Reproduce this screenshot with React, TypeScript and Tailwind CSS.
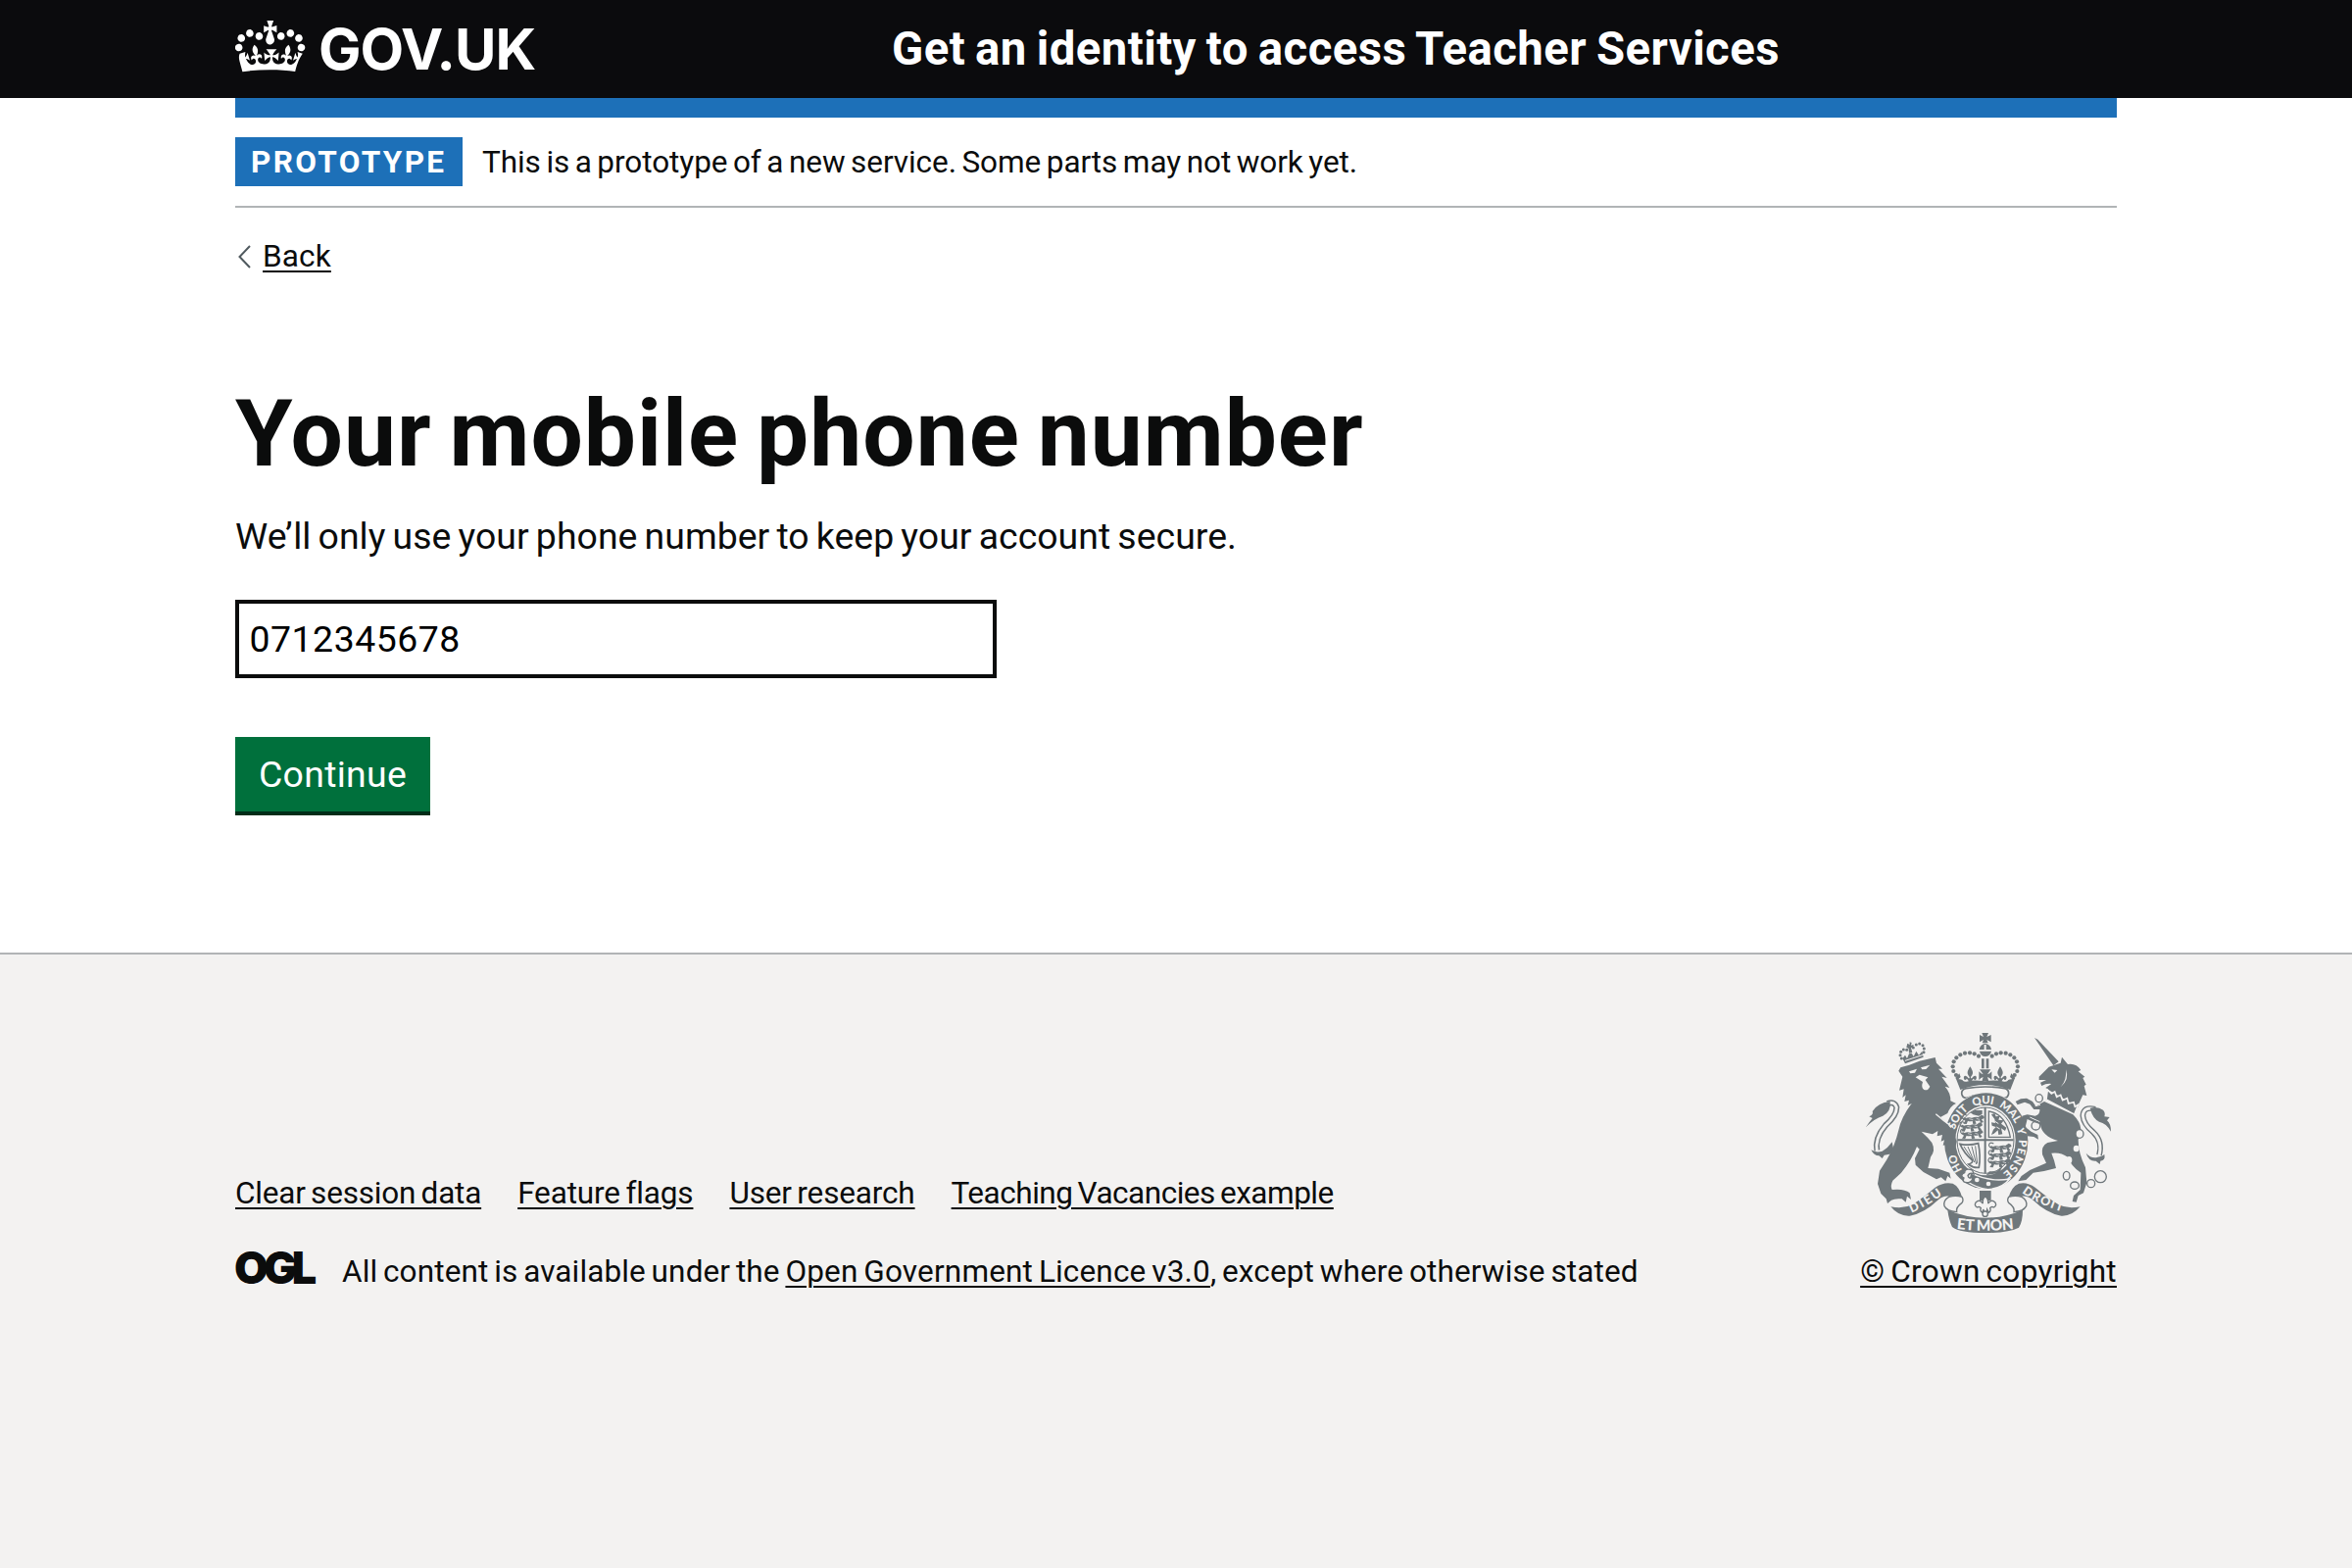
import type { ReactNode } from "react";

const INK = "#6f777b";
const PAPER = "#f3f2f1";

function CrownLogo() {
  return (
    <svg className="mt-[-10px] h-[64px] w-[72px] shrink-0" viewBox="0 0 36 32" fill="currentColor" fillRule="evenodd" aria-hidden="true">
      <path d="M6.7 12.2c1 .4 2.1-.1 2.5-1s-.1-2.1-1-2.5c-1-.4-2.1.1-2.5 1-.4 1 0 2.1 1 2.5m-4.3 2.5c1 .4 2.1-.1 2.5-1s-.1-2.1-1-2.5c-1-.4-2.1.1-2.5 1-.5 1 0 2.1 1 2.5m-1.3 4.8c1 .4 2.1-.1 2.5-1 .4-1-.1-2.1-1-2.5-1-.4-2.1.1-2.5 1-.4 1 0 2.1 1 2.5m10.4-5.8c1 .4 2.1-.1 2.5-1s-.1-2.1-1-2.5c-1-.4-2.1.1-2.5 1s0 2.1 1 2.5m17.4-1.5c-1 .4-2.1-.1-2.5-1s.1-2.1 1-2.5c1-.4 2.1.1 2.5 1 .5 1 0 2.1-1 2.5m4.3 2.5c-1 .4-2.1-.1-2.5-1s.1-2.1 1-2.5c1-.4 2.1.1 2.5 1 .5 1 0 2.1-1 2.5m1.3 4.8c-1 .4-2.1-.1-2.5-1-.4-1 .1-2.1 1-2.5 1-.4 2.1.1 2.5 1 .4 1 0 2.1-1 2.5m-10.4-5.8c-1 .4-2.1-.1-2.5-1s.1-2.1 1-2.5c1-.4 2.1.1 2.5 1s0 2.1-1 2.5m-5.3-4.9 2.4 1.3V6.5l-2.4.8c-.1-.1-.1-.2-.2-.3s1-3 1-3h-3.4l1 3c-.1.1-.2.2-.2.3-.1.1-2.4-.7-2.4-.7v3.5L17 8.8c-.1.1 0 .2.1.3l-1.4 4.2c-.1.2-.1.4-.1.7 0 1.1.8 2.1 1.9 2.2h.6C19.2 16 20 15.1 20 14c0-.2 0-.4-.1-.7l-1.4-4.2c.2-.1.3-.2.3-.3m-1 20.3c4.6 0 8.9.3 12.8.9 1.1-4.6 2.4-7.2 3.8-9.1l-2.6-.9c.3 1.3.3 1.9 0 2.7-.4-.4-.8-1.1-1.1-2.3l-1.2 4c.7-.5 1.3-.8 2-.9-1.1 2.5-2.6 3.1-3.5 3-1.1-.2-1.7-1.2-1.5-2.1.3-1.2 1.5-1.5 2.1-.1 1.1-2.3-.8-3-2-2.3 1.9-1.9 2.1-3.5.6-5.6-2.1 1.6-2.1 3.2-1.2 5.5-1.2-1.4-3.2-.6-2.5 1.6.9-1.4 2.1-.5 1.9.8-.2 1.1-1.7 2.1-3.5 1.9-2.7-.2-2.9-2.1-2.9-3.6.7-.1 1.9.5 2.9 1.9l.4-4.3c-1.1 1.1-2.1 1.4-3.2 1.4.4-1.2 2.1-3 2.1-3h-5.4s1.7 1.9 2.1 3c-1.1 0-2.1-.2-3.2-1.4l.4 4.3c1-1.4 2.2-2 2.9-1.9-.1 1.5-.2 3.4-2.9 3.6-1.9.2-3.4-.8-3.5-1.9-.2-1.3 1-2.2 1.9-.8.7-2.3-1.2-3-2.5-1.6.9-2.2.9-3.9-1.2-5.5-1.5 2-1.3 3.7.6 5.6-1.2-.7-3.1 0-2 2.3.6-1.4 1.8-1.1 2.1.1.2.9-.3 1.9-1.5 2.1-.9.2-2.4-.5-3.5-3 .6 0 1.2.3 2 .9l-1.2-4c-.3 1.1-.7 1.9-1.1 2.3-.3-.8-.2-1.4 0-2.7l-2.9.9C1.3 23 2.6 25.5 3.7 30.1c4.7-.7 9.3-1 14-1" />
    </svg>
  );
}

const crownBeads: [number, number][] = [
  [417, 143], [404, 136], [390, 133], [375, 134], [361, 139], [349, 148], [341, 160], [338, 175], [340, 189], [348, 201],
];
const chainLinks: [number, number, number, number][] = [
  [602, 272, 11, 12], [592, 356, 13, 13], [686, 509, 10, 13], [711, 539, 13, 11], [761, 533, 12, 12], [790, 512, 18, 18],
];
const smallCrownBeads: [number, number][] = [
  [181, 150], [177, 140], [179, 130], [187, 123], [197, 124], [217, 117], [226, 108], [236, 105], [246, 110], [250, 120], [249, 131],
];
const garterWords: [string, number, number][] = [
  ["SOIT", 34, 76], ["QUI", 128, 62], ["MAL", 208, 74], ["Y", 296, 18], ["PENSE", 332, 118],
];

/* A walking lion charge used in the quartered shield. */
function Passant({ y, x }: { x: number; y: number }) {
  return (
    <g transform={`translate(${x} ${y})`}>
      <path d="M2 4Q6 -4 12 2Q20 -2 30 1Q42 -4 50 -1L60 -8Q70 -6 68 2L60 6L66 14L58 17L54 9Q46 12 40 9L44 19L34 20L32 10Q24 13 18 10L14 20L4 19L10 10Z" />
      <path d="M6 6Q-4 0 2 -8Q6 -12 14 -7" fill="none" stroke={INK} strokeWidth="3.5" />
      <path d="M22 4L34 7M44 3L54 6" stroke={PAPER} strokeWidth="2" />
    </g>
  );
}

function FleurDeLis({ x, y }: { x: number; y: number }) {
  return (
    <g transform={`translate(${x} ${y})`}>
      <path d="M0 -27Q-9 -14 -8 -6Q-6 2 -2 5L-2 19L2 19L2 5Q6 2 8 -6Q9 -14 0 -27Z" />
      <path d="M-5 9Q-11 -2 -18 2Q-22 8 -17 14L-12 13Q-12 7 -7 14L-3 20H3L7 14Q12 7 12 13L17 14Q22 8 18 2Q11 -2 5 9Z" />
    </g>
  );
}

function RoyalArms() {
  return (
    <svg className="h-[204px] w-[250px]" viewBox="72 72 750 612" fill={INK} role="img" aria-label="Royal coat of arms">
      {/* crown above the garter */}
      <path d="M427 72H447L442 84L455 78V100L442 93L446 103H428L432 93L420 100V78L432 84Z" />
      <path d="M419 123Q422 106 437 104Q453 106 456 123H440V108H434V123ZM420 128H456Q453 143 437 144Q423 143 420 128Z" />
      <path d="M426 151H434V181H426ZM440 151H448V181H440Z" />
      {crownBeads.map(([x, y]) => (
        <g key={`${x}-${y}`}>
          <circle cx={x} cy={y} r="6.3" />
          <circle cx={875 - x} cy={y} r="6.3" />
        </g>
      ))}
      <path d="M420 184H454Q446 196 444 199Q452 197 457 190V216Q450 208 444 207L448 220H427L431 207Q424 208 418 216V190Q424 197 431 199Q429 196 420 184Z" />
      <FleurDeLis x={391} y={202} />
      <FleurDeLis x={483} y={202} />
      <path d="M346 210L358 196L362 207L355 214Q368 212 373 224L362 224Z" />
      <path d="M529 210L517 196L513 207L520 214Q507 212 502 224L513 224Z" />
      <path d="M346 208Q360 222 380 221Q400 214 437 220Q475 214 495 221Q515 222 529 208L514 246Q475 231 437 231Q400 231 361 246Z" />
      <path d="M366 262Q362 246 378 242Q437 232 497 242Q512 246 508 262Q504 274 492 270Q437 250 383 270Q370 274 366 262Z" fill={PAPER} stroke={INK} strokeWidth="5" />

      {/* garter and quartered shield */}
      <ellipse cx="440" cy="403" rx="130" ry="149" fill={PAPER} />
      <ellipse cx="440" cy="403" rx="128" ry="147" />
      <ellipse cx="438" cy="401" rx="92" ry="107" fill={PAPER} />
      <ellipse cx="438" cy="401" rx="87" ry="101" fill={PAPER} stroke={INK} strokeWidth="3" />
      <path d="M437 300V502M352 400H524" stroke={INK} strokeWidth="6" fill="none" />
      <Passant x={366} y={331} />
      <Passant x={360} y={354} />
      <Passant x={362} y={376} />
      <Passant x={449} y={418} />
      <Passant x={448} y={441} />
      <Passant x={447} y={464} />
      <path d="M392 316L404 309H428V320L418 326L400 322Z" />
      <path d="M448 391V312Q500 320 514 391Z" fill="none" stroke={INK} strokeWidth="4" />
      <path d="M456 322L466 318L470 328L482 326L478 338L494 340L486 350L502 362L498 372L486 364L490 382L478 384L476 370L464 380L456 384L462 368L470 360L458 356L456 346L468 348L466 336Z" />
      <path d="M466 342L478 350M472 360L482 366" stroke={PAPER} strokeWidth="3" />
      <path d="M360 412Q390 418 416 410Q424 450 418 484Q400 486 386 474Q400 470 398 462Q372 440 360 412Z" fill="none" stroke={INK} strokeWidth="5" />
      <path d="M372 420L398 460M384 420L404 468M396 419L410 474M407 418L413 472" stroke={INK} strokeWidth="3" />
      <path d="M450 496H472L492 478L480 500L440 508Z" />
      <path id="motto-arc" d="M340 403A100 114 0 0 1 440 289A100 114 0 0 1 540 403A100 114 0 0 1 440 517" fill="none" />
      <path id="motto-start" d="M372 498Q348 466 343 420" fill="none" />
      <g fill={PAPER} fontFamily="Lato, sans-serif" fontWeight="900" fontSize="34" wordSpacing="0">
        {garterWords.map(([word, start, length]) => (
          <text key={word}>
            <textPath href="#motto-arc" startOffset={start} textLength={length}>{word}</textPath>
          </text>
        ))}
        <text><textPath href="#motto-start" startOffset="8">HO</textPath></text>
      </g>

      {/* buckle and strap */}
      <path d="M392 500Q450 530 512 519Q490 548 445 551Q410 546 384 528Z" stroke={PAPER} strokeWidth="4" />
      <circle cx="412" cy="522" r="7" fill={PAPER} />
      <circle cx="447" cy="534" r="7" fill={PAPER} />
      <path d="M398 492Q374 484 374 500Q358 508 372 516Q364 532 386 530Q400 526 398 514Q386 520 384 508Q390 498 402 504Z" fill={PAPER} stroke={INK} strokeWidth="4" />

      {/* motto scroll */}
      <path d="M420 555H455V586H420Z" />
      <path d="M437 571Q428 582 430 594Q420 580 409 590Q402 600 412 606Q420 602 424 608Q420 618 428 622L432 612Q434 630 437 632Q441 630 443 612L448 622Q456 618 452 608Q456 602 464 606Q474 600 467 590Q456 580 446 594Q448 582 437 571Z" fill={PAPER} stroke={INK} strokeWidth="4" />
      <circle cx="437" cy="626" r="8" fill={PAPER} stroke={INK} strokeWidth="4" />
      <path d="M148 604Q185 612 214 598Q255 570 284 545Q310 527 338 533Q358 542 367 577Q348 568 330 573Q312 568 292 584Q250 624 206 632Q172 634 148 604Z" />
      <path d="M728 604Q690 612 662 598Q620 570 590 545Q566 527 540 533Q518 542 508 577Q526 568 546 573Q563 568 584 584Q626 624 670 632Q702 634 728 604Z" />
      <path d="M326 574Q308 584 312 602Q320 618 350 620Q346 606 366 592Q372 584 366 574Q346 568 326 574Z" fill={PAPER} stroke={INK} strokeWidth="4" />
      <path d="M549 574Q567 584 563 602Q555 618 525 620Q529 606 509 592Q503 584 509 574Q529 568 549 574Z" fill={PAPER} stroke={INK} strokeWidth="4" />
      <path d="M322 614Q380 638 437 638Q495 638 552 614Q552 650 540 668Q510 684 437 684Q360 684 336 666Q326 645 322 614Z" />
      <path id="scroll-left" d="M206 625Q256 606 322 556" fill="none" />
      <path id="scroll-mid" d="M340 671Q437 684 540 670" fill="none" />
      <path id="scroll-right" d="M546 558Q600 600 690 624" fill="none" />
      <g fill={PAPER} fontFamily="Lato, sans-serif" fontWeight="900">
        <text fontSize="38"><textPath href="#scroll-left" startOffset="6" textLength="110">DIEU</textPath></text>
        <text fontSize="46"><textPath href="#scroll-mid" startOffset="10" textLength="176">ET MON</textPath></text>
        <text fontSize="38"><textPath href="#scroll-right" startOffset="4" textLength="136">DROIT</textPath></text>
      </g>

      {/* crowned lion */}
      <path d="M138 288Q160 280 166 300Q166 325 132 355Q98 395 106 432" fill="none" stroke={INK} strokeWidth="18" />
      <path d="M138 288Q160 280 166 300Q166 325 132 355Q98 395 106 436" fill="none" stroke={PAPER} strokeWidth="9" />
      <path d="M72 360Q82 345 92 333L82 328Q96 322 92 312Q108 286 146 282Q150 312 124 326Q98 334 72 360Z" />
      <path d="M88 430Q102 440 122 434Q140 424 152 406L158 436Q146 446 128 446L122 456L112 448Q96 448 88 430Z" />
      <path d="M172 188L178 178L205 170L236 158L284 147L288 164L306 182L294 182L320 210L304 206L328 240L314 236Q332 256 331 280L348 288Q330 296 322 318L300 330Q326 352 340 378L350 404L344 430L336 416L328 428L322 414L308 416L312 400L302 404L306 384L290 388L292 372L276 382L242 374Q262 392 274 408Q286 432 270 452L262 486L294 488L328 500L332 518L322 510L316 526L302 514L288 520L248 498L232 484L224 476L222 456L236 428L228 420Q212 462 180 500L154 524Q146 540 152 552Q190 548 206 562L210 582L198 572L194 590L182 580Q160 578 150 584L138 594L134 580L118 564L108 534L114 494L136 460Q160 420 172 370Q180 330 212 288L200 294L204 278L190 282L194 262L184 270L188 244L174 248L184 206Z" />
      <path d="M286 320Q310 342 340 362" fill="none" stroke={PAPER} strokeWidth="4" />
      <path d="M204 190L228 182L222 194L208 196ZM240 178L268 170L256 183L244 184ZM224 208L236 200L262 208L254 216L268 236Q262 250 250 246Q240 240 246 222Z" fill={PAPER} />
      {smallCrownBeads.map(([x, y]) => (
        <circle key={`${x}-${y}`} cx={x} cy={y} r="4.5" />
      ))}
      <path d="M199 104L206 108L206 100L212 102L210 110L218 108L216 116L210 118L214 132L204 134L203 120L196 116Z" />
      <path d="M184 150L192 140L198 150L204 136L212 134L218 144L226 128L234 140L244 128L248 146L192 166Z" />
      <path d="M192 157L248 139" stroke={PAPER} strokeWidth="3" />

      {/* chained unicorn */}
      <path d="M774 305Q738 296 736 325Q738 352 768 376Q798 404 786 446" fill="none" stroke={INK} strokeWidth="17" />
      <path d="M774 305Q738 296 736 325Q738 352 768 376Q798 404 785 450" fill="none" stroke={PAPER} strokeWidth="9" />
      <path d="M758 302Q782 296 798 308Q806 316 802 328L818 330L810 340Q822 350 822 374Q808 348 786 344Q766 334 758 302Z" />
      <path d="M746 440Q762 458 782 452Q796 450 802 444Q806 462 790 464L788 474L776 464Q754 466 746 440Z" />
      <path d="M588 87L598 92L662 160L646 172Z" />
      <path d="M602 206L632 176L656 168L668 164L672 146L690 168Q716 164 730 186L722 190L742 206L736 210L746 230L740 234L748 264L736 262L726 284L722 300L634 248L622 240L640 228Q624 226 610 234L606 224L624 216L602 216Z" />
      <path d="M640 184L658 186L650 194ZM684 184Q696 214 668 238Q688 216 684 184Z" fill={PAPER} />
      <path d="M628 246L640 258L650 252L656 268L668 262L674 278L688 272L692 288L708 284L712 298L722 292L710 322L624 276Z" fill={INK} stroke={PAPER} strokeWidth="5" />
      <path d="M618 282L706 322Q728 344 730 366L722 400Q722 440 744 484L748 530L738 562L722 570L716 590L704 588L708 570L728 552L730 500Q700 480 690 452Q668 436 640 440L648 462L654 486Q620 496 584 500L562 522L538 526L548 510L574 492L624 470L612 444Q608 418 628 408L660 402Q610 388 606 352L584 344L566 336L560 360L578 374L598 384L600 398L586 390L566 388L564 374L548 354L550 326L566 322L590 326Q606 322 604 306L586 306L574 290L558 284L536 292L530 282L546 274L564 272L582 282L592 296Z" />
      <path d="M590 296L606 292M574 330L604 344" stroke={PAPER} strokeWidth="3" />
      {chainLinks.map(([x, y, rx, ry]) => (
        <ellipse key={`${x}-${y}`} cx={x} cy={y} rx={rx} ry={ry} fill="none" stroke={INK} strokeWidth="4" />
      ))}
      <ellipse cx="726" cy="381" rx="12" ry="13" fill={PAPER} stroke={INK} strokeWidth="4" />
      <ellipse cx="716" cy="426" rx="9" ry="10" fill={PAPER} />
      <ellipse cx="694" cy="461" rx="9" ry="11" fill={PAPER} />
    </svg>
  );
}

function TextLink({ className, children }: { className: string; children: ReactNode }) {
  return (
    <a href="#" className={"underline decoration-2 underline-offset-[4px] " + className}>
      {children}
    </a>
  );
}

export default function App() {
  return (
    <div className="flex min-h-[1600px] flex-col bg-white font-['Roboto',sans-serif] text-[31.5px] leading-[40px] text-[#0b0c0c] [word-spacing:-2.2px]">
      <header className="bg-[#0b0b0d] text-white">
        <div className="mx-auto flex h-[100px] w-[1920px] items-center">
          <a href="#" className="flex w-[670px] items-center gap-[13px]">
            <CrownLogo />
            <span className="font-['Inter',sans-serif] text-[58px] font-bold leading-[100px] tracking-[-1px]">GOV.UK</span>
          </a>
          <a href="#" className="whitespace-nowrap text-[47.3px] font-bold leading-[100px] tracking-[0.44px]">
            Get an identity to access Teacher Services
          </a>
        </div>
      </header>

      <div className="mx-auto w-[1920px]">
        <div className="h-[20px] bg-[#1d70b8]" />
        <div className="flex items-center border-b-2 border-[#b1b4b6] py-[20px]">
          <strong className="h-[50px] w-[232px] bg-[#1d70b8] pl-[16px] pt-px font-bold leading-[50px] tracking-[2.35px] text-white">PROTOTYPE</strong>
          <span className="ml-[20px] whitespace-nowrap pt-px tracking-[-0.06px]">
            This is a prototype of a new service. Some parts may not work yet.
          </span>
        </div>

        <a href="#" className="mt-[30px] flex h-[40px] w-fit items-center">
          <svg className="mr-[12px] ml-[3px] h-[24px] w-[13px]" viewBox="0 0 13 24" fill="none" stroke="#505a5f" strokeWidth="2" aria-hidden="true">
            <path d="M12 1L1.5 12L12 23" />
          </svg>
          <span className="tracking-[0.15px] underline decoration-2 underline-offset-[4px]">Back</span>
        </a>

        <main>
          <h1 className="mt-[111px] text-[94.6px] font-bold leading-[100px] tracking-[1px] [word-spacing:-6.6px]">Your mobile phone number</h1>
          <p className="mt-[29px] text-[37.4px] leading-[50px] tracking-[0.04px]">
            We’ll only use your phone number to keep your account secure.
          </p>
          <div className="mt-[40px] h-[80px] w-[777px] border-4 border-[#0b0c0c] bg-white pl-[10.5px] text-[37.4px] leading-[72px] tracking-[0.52px] text-black">
            0712345678
          </div>
          <button className="mt-[60px] block h-[80px] w-[199px] border-b-4 border-[#002d18] bg-[#00703c] text-center text-[37.4px] leading-[76px] tracking-[0.3px] text-white">
            Continue
          </button>
        </main>
      </div>

      <footer className="mt-[140px] flex-1 border-t-2 border-[#b1b4b6] bg-[#f3f2f1] pt-[80px]">
        <div className="mx-auto flex w-[1920px] items-end justify-between">
          <div>
            <div className="flex gap-[37px]">
              <TextLink className="tracking-[-0.2px]">Clear session data</TextLink>
              <TextLink className="tracking-[-0.13px]">Feature flags</TextLink>
              <TextLink className="tracking-[-0.15px]">User research</TextLink>
              <TextLink className="tracking-[-0.48px]">Teaching Vacancies example</TextLink>
            </div>
            <div className="mt-[40px] flex">
              <span className="ml-[-1px] mt-[-4px] w-[110px] font-['Inter',sans-serif] text-[45px] font-black tracking-[-5px]">OGL</span>
              <p className="whitespace-nowrap tracking-[0.13px]">
                All content is available under the{" "}
                <TextLink className="tracking-[0.17px]">Open Government Licence v3.0</TextLink>, except where otherwise stated
              </p>
            </div>
          </div>
          <div className="flex flex-col items-center">
            <RoyalArms />
            <TextLink className="mt-[20px] tracking-[0.32px]">© Crown copyright</TextLink>
          </div>
        </div>
      </footer>
    </div>
  );
}
